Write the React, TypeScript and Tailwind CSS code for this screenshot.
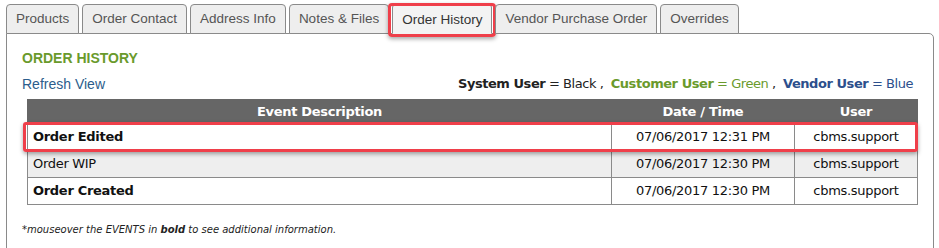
import React from 'react';

const tabs = ['Products', 'Order Contact', 'Address Info', 'Notes & Files', 'Order History', 'Vendor Purchase Order', 'Overrides'];

const rows = [
  { event: 'Order Edited', bold: true, date: '07/06/2017 12:31 PM', user: 'cbms.support' },
  { event: 'Order WIP', bold: false, date: '07/06/2017 12:30 PM', user: 'cbms.support' },
  { event: 'Order Created', bold: true, date: '07/06/2017 12:30 PM', user: 'cbms.support' },
];

export default function App() {
  return (
    <div className="w-[939px] h-[248px] overflow-hidden bg-white pt-[4px] pl-[6px] pr-[5px] font-['Liberation_Sans',Arial,sans-serif]">
      {/* Tabs */}
      <div className="flex items-end gap-[3px] relative z-10">
        {tabs.map(tab => {
          const active = tab === 'Order History';
          return (
            <div key={tab} className="relative">
              <div
                className={`h-[30px] px-[9px] flex items-center border border-[#8a8a8a] rounded-t-[4px] text-[13.5px] ${
                  active ? 'bg-[#f3f3f3] text-[#333] pt-[2px] border-b-[#f3f3f3]' : 'bg-[#eeeeee] text-[#555]'
                }`}
              >
                {tab}
              </div>
              {active && (
                <div className="absolute -left-[4px] -right-[4px] -top-[1px] -bottom-[3px] border-[3px] border-[#ef3f4a] rounded-[4px] shadow-[0_2px_4px_rgba(0,0,0,0.35)]" />
              )}
            </div>
          );
        })}
      </div>

      {/* Panel */}
      <div className="-mt-px border border-[#8a8a8a] rounded-tr-[5px] pl-[15px] pr-[15px] pt-[15px] h-[240px]">
        <h2 className="text-[14px] font-bold text-[#6a9a2c] leading-[18px]">ORDER HISTORY</h2>

        <div className="flex justify-between items-center mt-[8px] h-[18px]">
          <span className="text-[14px] text-[#2c5d8c]">Refresh View</span>
          <span className="pr-[5px] text-[13px] font-['DejaVu_Sans',Verdana,sans-serif] tracking-[-0.45px] text-[#222]">
            <b>System User</b> = Black ,&nbsp;{' '}
            <b className="text-[#6a9a2c]">Customer User</b> <span className="text-[#6a9a2c]">= Green</span> ,&nbsp;{' '}
            <b className="text-[#2c4f8c]">Vendor User</b> <span className="text-[#2c4f8c]">= Blue</span>
          </span>
        </div>

        <div className="relative ml-[5px] mt-[6px]">
          <table className="w-full border-collapse font-['DejaVu_Sans',Verdana,sans-serif] text-[13px] tracking-[-0.3px]">
            <thead>
              <tr className="bg-[#666666] text-white h-[24px]">
                <th className="font-bold border border-[#666]">Event Description</th>
                <th className="font-bold border border-[#666] w-[183px]">Date / Time</th>
                <th className="font-bold border border-[#666] w-[123px]">User</th>
              </tr>
            </thead>
            <tbody>
              {rows.map((r, i) => (
                <tr key={i} className={`h-[27px] ${i % 2 === 1 ? 'bg-[#eeeeee]' : 'bg-white'} text-[#111]`}>
                  <td className={`border border-[#8a8a8a] px-[5px] ${r.bold ? 'font-bold' : ''}`}>{r.event}</td>
                  <td className="border border-[#8a8a8a] text-center">{r.date}</td>
                  <td className="border border-[#8a8a8a] text-center">{r.user}</td>
                </tr>
              ))}
            </tbody>
          </table>
          <div className="absolute left-[-4px] right-0 top-[23px] h-[30px] border-[3px] border-[#ef3f4a] rounded-[3px] shadow-[0_2px_4px_rgba(0,0,0,0.35)]" />
        </div>

        <p className="mt-[17px] text-[10px] italic font-['DejaVu_Sans',Verdana,sans-serif] text-[#222]">
          *mouseover the EVENTS in <b>bold</b> to see additional information.
        </p>
      </div>
    </div>
  );
}
